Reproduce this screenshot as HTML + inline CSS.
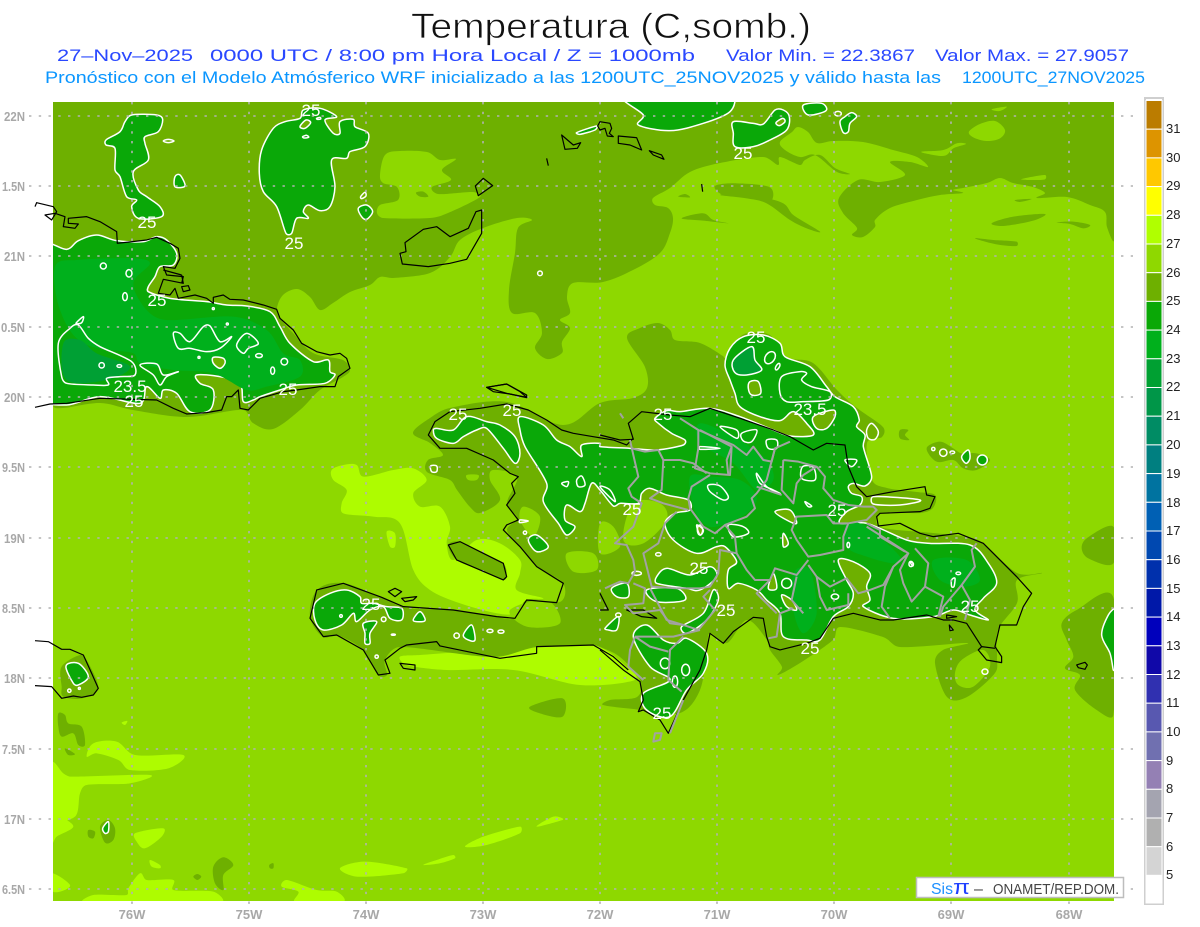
<!DOCTYPE html>
<html lang="es"><head><meta charset="utf-8"><title>Temperatura (C,somb.)</title>
<style>
html,body{margin:0;padding:0;background:#fff}
svg{display:block}
text{font-family:"Liberation Sans",sans-serif}
.o{fill:#6eb000;stroke:none}
.l{fill:#8ed800;stroke:none}
.y{fill:#aefc00;stroke:none}
.g{fill:#0aa808;stroke:#fff;stroke-width:4.5;stroke-linejoin:round}
.g2{fill:#00b01c;stroke:none}
.g3{fill:#00a034;stroke:none}
.w{fill:none;stroke:#fff;stroke-width:4.5;stroke-linejoin:round}
.wo{fill:#6eb000;stroke:#fff;stroke-width:4.5;stroke-linejoin:round}
.k{fill:none;stroke:#000;stroke-width:3.6;stroke-linejoin:round}
.p{fill:none;stroke:#a2a2a2;stroke-width:6;stroke-linejoin:round}
.lb{fill:#fff;font-size:17px;text-anchor:middle}
.ax{fill:#a8a8a8;font-size:13px;font-weight:bold}
.lg{fill:#222;font-size:13px}
</style></head><body>
<svg width="1200" height="927" viewBox="0 0 1200 927" xmlns="http://www.w3.org/2000/svg">
<rect width="1200" height="927" fill="#fff"/>
<defs><clipPath id="m"><rect x="53" y="102" width="1061" height="799"/></clipPath></defs>

<text x="411" y="38" font-size="35" textLength="400" lengthAdjust="spacingAndGlyphs" fill="#111" stroke="#fff" stroke-width=".7" paint-order="fill">Temperatura (C,somb.)</text>
<g font-size="17" fill="#2a48ff">
<text x="57" y="61" textLength="136" lengthAdjust="spacingAndGlyphs">27–Nov–2025</text>
<text x="210" y="61" textLength="485" lengthAdjust="spacingAndGlyphs">0000 UTC / 8:00 pm Hora Local / Z = 1000mb</text>
<text x="726" y="61" textLength="189" lengthAdjust="spacingAndGlyphs">Valor Min. = 22.3867</text>
<text x="935" y="61" textLength="194" lengthAdjust="spacingAndGlyphs">Valor Max. = 27.9057</text>
</g>
<g font-size="17" fill="#0a96ff">
<text x="45" y="83" textLength="896" lengthAdjust="spacingAndGlyphs">Pronóstico con el Modelo Atmósferico WRF inicializado a las 1200UTC_25NOV2025 y válido hasta las</text>
<text x="962" y="83" textLength="183" lengthAdjust="spacingAndGlyphs">1200UTC_27NOV2025</text>
</g>

<g clip-path="url(#m)">
<rect x="53" y="102" width="1061" height="799" fill="#8ed800"/>

<!-- top / cuba olive -->
<polygon class="o" points="53,102 1114,102 1114,240 1107,227 1105,212 1090,205 1067,197 1037,198 1045,193 1033,187 1013,183 1000,178 987,183 963,188 953,190 963,193 940,195 917,200 890,208 875,220 875,227 863,237 852,235 857,228 843,213 839,198 858,180 880,182 905,175 890,162 910,162 928,167 917,157 893,150 863,142 833,141 817,143 808,132 798,127 792,132 780,142 785,150 800,157 815,155 837,172 850,174 835,168 820,155 805,160 800,165 780,157 778,165 763,157 720,163 690,172 670,188 653,198 655,205 668,208 673,218 670,233 660,253 633,270 603,282 573,283 567,297 570,313 560,320 570,328 562,342 562,353 547,359 535,348 542,333 535,313 512,313 509,290 515,253 518,228 532,220 517,218 483,228 460,240 450,257 430,273 393,278 380,277 370,285 350,292 333,303 320,310 310,297 297,289 283,295 277,308 280,318 293,333 313,353 343,360 350,370 343,377 320,390 300,410 273,429 253,423 243,410 187,417 133,410 100,403 63,408 53,405"/>
<!-- light patches in olive -->
<polygon class="l" points="385,155 400,151 427,152 440,160 456,159 442,170 451,180 432,187 438,194 473,192 480,197 448,213 430,218 383,218 377,213 380,205 398,200 397,187 383,183 380,175"/>
<g transform="translate(720,100) scale(.3333)">
<polygon class="l" points="747,95 780,72 825,63 855,90 840,115 800,123 760,112"/>
<polygon class="l" points="605,155 670,150 710,130 738,132 700,145 675,167 630,163"/>
<polygon class="l" points="815,28 860,20 840,33"/>
<polygon class="l" points="905,237 975,225 975,238 930,240"/>
<polygon class="o" points="885,300 935,297 900,306"/>
<polygon class="o" points="815,370 880,350 975,342 940,362 850,378"/>
<polygon class="o" points="765,415 820,420 890,425 890,438 830,433"/>
<polygon class="o" points="1010,368 1060,365 1110,375 1090,385 1050,372"/>
<polygon class="o" points="0,285 65,280 120,290 190,310 220,345 300,395 260,385 210,360 140,310 80,295"/>
</g>
<g transform="translate(370,100) scale(.3333)">
<polygon class="o" points="1035,258 1100,250 1200,262 1200,305 1130,285 1060,285"/>
<polygon class="o" points="935,355 1000,340 1030,360 1075,370 1000,362"/>
<polygon class="o" points="925,290 945,282 960,292"/>
<polygon class="o" points="138,278 160,275 175,290 150,290"/>
</g>
<!-- yellow -->
<g transform="translate(280,380) scale(.3333)">
<polygon class="y" points="155,270 190,255 230,255 250,290 340,270 400,265 440,300 400,340 420,380 480,380 510,440 500,490 520,540 590,480 660,490 720,540 720,580 710,630 790,655 740,660 705,700 650,700 540,670 450,630 400,570 360,430 280,410 190,400 185,370 200,330 160,300"/>
<polygon class="y" points="360,830 420,825 770,800 940,795 1040,860 1065,900 900,915 700,870 500,870 380,855"/>
<polygon class="y" points="320,455 345,460 345,500 330,500"/>
</g>
<g transform="translate(40,620) scale(.3333)">
<polygon class="y" points="140,410 160,370 230,365 285,405 430,405 385,445 270,450 235,420 170,400"/>
<polygon class="y" points="35,430 70,460 95,470 330,465 270,490 140,495 120,520 105,590 35,590"/>
<polygon class="y" points="35,590 60,590 100,620 50,650 35,670"/>
<polygon class="y" points="285,640 370,625 365,650 315,685 290,665"/>
<polygon class="y" points="35,760 90,795 60,815 35,810"/>
<polygon class="y" points="130,845 160,825 260,825 265,805 300,760 320,780 400,780 400,810 520,815 545,845"/>
<polygon class="y" points="725,800 740,780 830,810 890,815 910,845 765,845 775,815"/>
<polygon class="y" points="900,745 975,725 1100,745 1090,760 950,770"/>
<polygon class="y" points="1275,680 1330,650 1440,620 1440,640 1340,675"/>
<polygon class="y" points="1150,735 1190,720 1240,705 1245,715 1200,730"/>
<polygon class="y" points="1490,620 1540,590 1568,595 1568,600"/>
<polygon class="y" points="330,720 360,735 360,745 335,740"/>
<polygon class="y" points="245,308 262,303 255,315"/>
<polygon class="o" points="55,280 75,285 85,310 125,320 135,375 115,375 100,340 65,350 55,320"/>
<polygon class="o" points="520,740 550,712 580,735 550,765 550,810 525,790"/>
<polygon class="o" points="145,630 165,635 160,655 145,650"/>
<polygon class="o" points="180,620 205,600 225,625 220,660 195,668"/>
<polygon class="o" points="65,140 120,105 140,120 175,205 125,235 70,230 65,200"/>
<polygon class="o" points="75,385 105,402 85,405"/>
<polygon class="o" points="460,770 472,762 484,770 472,780"/>
<polygon class="o" points="688,735 700,730 700,745 690,745"/>
<polygon class="o" points="1470,260 1568,235 1568,290 1500,280"/>
</g>
<g transform="translate(1050,500) scale(.3333)">
<polygon class="o" points="190,80 110,115 95,145 115,175 190,190"/>
<polygon class="o" points="190,292 80,330 35,370 50,420 70,470 45,505 90,525 75,570 140,630 190,645"/>
<polygon class="g" points="195,330 175,345 155,405 180,460 190,510 195,510"/>
</g>
<!-- Hispaniola olive -->
<polygon class="o" points="413,433 430,418 450,408 507,402 563,425 600,403 633,398 647,388 645,367 627,338 640,328 658,323 670,330 675,340 700,343 723,356 725,358 737,340 748,333 770,335 787,357 813,363 837,390 857,408 883,427 882,437 867,443 872,480 887,488 917,492 935,495 933,508 920,513 880,513 880,527 933,533 967,537 983,543 1017,573 1042,573 1017,580 1017,603 998,630 997,657 995,673 967,697 947,697 935,663 943,650 967,643 900,647 883,637 840,627 833,640 800,663 778,675 782,667 770,650 767,640 747,620 727,643 710,633 707,650 700,690 680,713 643,710 603,705 610,700 637,697 640,680 620,657 600,647 593,645 537,647 493,657 400,647 385,660 387,675 378,675 363,650 337,635 323,637 310,617 317,590 343,583 380,597 407,608 453,610 497,617 515,618 527,600 560,602 563,583 537,567 520,547 507,530 517,518 507,503 517,477 493,470 490,480 500,500 480,513 470,507 457,490 450,480 427,472 428,460 443,455 430,443"/>
<g transform="translate(600,380) scale(.3333)">
<polygon class="l" points="1065,880 1085,840 1150,810 1170,860 1120,920 1075,915"/>
<polygon class="o" points="900,150 925,150 915,165 928,180 900,175"/>
<polygon class="o" points="980,205 1020,185 1060,205 1085,220 1130,220 1170,240 1130,270 1090,265 1060,240 1010,245"/>
<polygon class="l" points="100,370 180,370 200,420 130,490 70,480"/>
<polygon class="l" points="0,430 40,440 60,500 0,520"/>
</g>
<g transform="translate(280,380) scale(.3333)">
<polygon class="o" points="505,495 540,485 610,520 670,550 680,590 670,600 600,570 530,540"/>
<polygon class="l" points="860,520 940,520 950,570 880,575"/>
<polygon class="l" points="730,380 780,410 760,470 720,420"/>
<polygon class="l" points="690,690 800,660 840,730 740,740"/>
<polygon class="l" points="560,285 595,285 590,300 565,300"/>
</g>

<!-- green: top blobs -->
<g transform="scale(.3333)">
<polygon class="g" points="395,345 470,345 488,358 475,395 435,410 435,430 445,480 400,515 415,570 440,590 480,620 485,650 415,655 395,620 410,600 380,590 360,530 345,510 345,445 318,435 318,420 360,395 375,365"/>
<polygon class="g" points="900,355 910,330 960,325 1010,350 975,360 1000,400 1020,400 1020,365 1060,358 1065,380 1105,400 1095,440 1050,455 1040,475 995,480 1005,560 990,620 960,632 925,615 910,635 925,655 890,655 875,700 858,700 830,620 790,575 778,520 785,450 820,385 855,365"/>
<polygon class="g" points="525,530 540,525 555,558 525,560"/>
<polygon class="g" points="1075,625 1100,615 1118,635 1100,658 1085,650"/>
<polygon class="w" points="490,423 505,418 522,423 505,428"/>
<polygon class="wo" points="900,380 918,360 932,368 915,385"/>
<polygon class="w" points="908,410 920,406 926,412 912,414"/>
<polygon class="w" points="1082,590 1095,577 1098,588 1085,596"/>
<polygon class="w" points="950,355 960,352 962,357 952,358"/>
</g>
<g transform="translate(370,100) scale(.3333)">
<polygon class="g" points="765,-10 820,45 805,75 900,92 1000,70 1080,35 1085,-10"/>
<polygon class="g" points="620,98 680,78 675,90 630,103"/>
<circle class="w" cx="510" cy="520" r="7"/>
</g>
<g transform="translate(720,100) scale(.3333)">
<polygon class="g" points="40,65 100,70 130,72 165,30 190,30 208,50 200,90 150,120 100,140 45,140 40,100"/>
<polygon class="wo" points="168,68 188,55 195,65 178,77"/>
<polygon class="g" points="250,15 305,10 318,32 265,45"/>
<polygon class="g" points="360,65 375,50 395,38 410,50 390,70 385,95 370,98"/>
<ellipse class="w" cx="354" cy="41" rx="10" ry="7"/>
</g>
<!-- Cuba -->
<g transform="translate(0,220) scale(.3333)">
<polygon class="g" points="130,78 200,88 235,62 290,45 350,62 430,65 470,50 500,60 530,100 520,135 480,140 465,170 445,200 445,215 510,235 620,245 680,255 740,258 810,275 840,320 870,370 940,425 985,420 990,455 1005,465 975,490 890,495 840,510 780,530 760,540 730,545 720,490 660,470 590,465 600,490 640,510 630,570 570,575 530,520 490,510 480,535 440,500 420,550 300,530 200,555 130,530"/>
<polygon class="g2" points="165,140 230,120 400,115 450,130 400,190 440,270 500,300 700,290 800,330 850,400 900,420 900,470 800,500 740,510 640,460 520,450 420,430 400,400 250,370 180,270"/>
<polygon class="g3" points="190,370 240,360 290,400 390,440 320,480 200,480"/>
<polygon class="w" points="175,370 210,325 235,315 265,355 300,380 395,425 405,465 360,470 320,475 325,495 280,495 200,490 185,470"/>
<polygon class="w" points="228,310 250,290 245,308"/>
<polygon class="w" points="520,340 540,340 570,365 610,320 630,318 660,365 695,350 660,385 620,395 570,385 535,385"/>
<polygon class="w" points="710,375 740,340 775,370 745,385 730,400"/>
<polygon class="wo" points="640,412 670,415 675,430 660,445 640,430"/>
<polygon class="w" points="420,435 470,432 490,465 535,455 500,470 480,495 460,465"/>
<ellipse class="w" cx="310" cy="138" rx="9" ry="9"/>
<ellipse class="w" cx="387" cy="160" rx="9" ry="11"/>
<ellipse class="w" cx="375" cy="230" rx="7" ry="12"/>
<circle class="w" cx="305" cy="436" r="8"/>
<ellipse class="w" cx="358" cy="438" rx="7" ry="4"/>
<ellipse class="w" cx="853" cy="425" rx="10" ry="10"/>
<ellipse class="w" cx="818" cy="452" rx="6" ry="11"/>
<ellipse class="w" cx="777" cy="407" rx="10" ry="6"/>
<circle class="w" cx="640" cy="266" r="3"/>
<circle class="w" cx="682" cy="312" r="3"/>
<circle class="w" cx="597" cy="412" r="3"/>
</g>
<!-- Haiti greens -->
<g transform="translate(280,380) scale(.3333)">
<polygon class="g" points="460,150 470,145 520,150 560,110 620,125 660,135 705,170 720,220 705,250 670,205 620,145 590,150 550,170 520,190 470,175"/>
<polygon class="g" points="105,670 150,640 200,630 240,650 245,670 280,670 320,680 365,685 365,720 330,715 310,680 270,690 230,725 220,700 185,735 130,750 105,720"/>
<polygon class="g" points="250,730 290,725 270,760 270,790 255,790 255,760"/>
<polygon class="g" points="400,722 420,695 435,722"/>
<polygon class="g" points="550,765 575,735 585,780 565,780"/>
<polygon class="g" points="745,480 770,465 805,500 770,515"/>
<circle class="w" cx="311" cy="718" r="7"/>
<circle class="w" cx="183" cy="708" r="4"/>
<circle class="w" cx="530" cy="767" r="8"/>
<ellipse class="w" cx="630" cy="753" rx="9" ry="5"/><ellipse class="w" cx="663" cy="755" rx="9" ry="5"/>
<ellipse class="w" cx="340" cy="764" rx="6" ry="2"/>
<ellipse class="w" cx="290" cy="830" rx="5" ry="5"/>
<polygon class="w" points="452,258 470,258 470,275 455,275"/>
<polygon class="w" points="720,420 745,423 720,428"/>
<circle class="w" cx="735" cy="458" r="5"/>
</g>
<!-- Hispaniola main green (Haiti north + DR) -->
<g transform="translate(600,380) scale(.3333)">
<polygon class="g" points="0,200 90,205 170,210 250,195 255,180 215,160 175,130 165,115 200,92 240,95 330,85 420,110 520,150 570,168 640,165 620,130 580,95 540,122 480,110 420,80 405,40 390,0 375,-45 390,-95 430,-130 490,-135 540,-110 555,-70 630,-40 680,20 705,50 760,80 778,120 770,140 795,165 790,200 815,290 795,318 760,310 745,320 755,340 785,350 780,375 740,395 720,430 800,430 920,480 990,490 1110,495 1165,550 1190,610 1150,655 1125,690 1165,720 1110,705 1060,690 1000,710 880,715 790,680 810,660 800,620 810,580 760,545 715,540 740,600 760,640 745,680 700,710 660,780 620,780 550,770 540,700 500,660 470,630 415,610 385,625 385,570 410,545 375,500 350,500 290,520 220,480 195,430 225,400 270,390 265,360 200,345 150,325 125,340 115,370 60,370 40,378 0,330 -25,310 -45,370 -60,395 -100,375 -105,420 -75,440 -100,465 -125,430 -170,365 -160,310 -225,200 -240,150 -240,110 -170,135 -130,180 -90,200 -55,230 -55,195 0,190"/>
<polygon class="g2" points="270,290 330,290 420,300 470,350 440,400 350,440 310,430 280,380"/>
<polygon class="g2" points="580,580 630,570 650,700 610,760 580,690"/>
<polygon class="g2" points="740,430 800,440 900,530 880,550 800,530 740,500"/>
<polygon class="g2" points="1000,540 1100,540 1140,600 1090,620 1020,600"/>
<polygon class="g2" points="300,130 400,170 500,240 520,300 470,330 400,250 300,190"/>
<polygon class="g" points="170,590 200,565 270,585 330,560 350,590 300,630 260,625 170,610"/>
<polygon class="g" points="130,940 210,900 150,860 100,770 140,735 190,780 230,790 260,775 320,820 310,880 260,930 210,1010 140,990"/>
<polygon class="g" points="15,745 55,710 50,750 25,750"/>
<polygon class="g" points="35,625 80,610 85,650 50,650"/>
<polygon class="g" points="140,630 230,625 255,660 170,665"/>
<polygon class="g" points="310,700 340,630 355,660 320,720 260,760 245,740"/>
<polygon class="wo" points="525,395 570,390 590,430 560,420"/>
<polygon class="wo" points="550,460 565,490 550,500"/>
<polygon class="wo" points="505,625 520,580 530,625"/>
<polygon class="wo" points="545,645 575,660 590,690 560,680"/>
<polygon class="wo" points="290,435 310,450 300,465"/>
<polygon class="w" points="385,435 430,440 445,460 400,470"/>
<polygon class="w" points="425,160 470,150 455,185 430,183"/>
<polygon class="w" points="360,140 410,150 410,175"/>
<polygon class="w" points="500,180 530,180 530,205 505,205"/>
<polygon class="w" points="300,200 360,205 300,208"/>
<polygon class="w" points="325,315 360,318 385,350 370,360 330,335"/>
<polygon class="w" points="470,280 480,310 520,330 540,340 500,320"/>
<polygon class="w" points="608,260 640,262 645,300 605,295"/>
<polygon class="w" points="615,365 635,378 625,380"/>
<polygon class="w" points="735,240 770,240 755,260"/>
<polygon class="w" points="820,350 960,360 900,375 820,372"/>
<polygon class="w" points="1055,600 1065,595 1062,620 1055,620"/>
<polygon class="w" points="930,545 940,550 938,558"/>
<ellipse class="w" cx="705" cy="650" rx="11" ry="8"/>
<ellipse class="w" cx="560" cy="610" rx="15" ry="15"/>
<ellipse class="w" cx="55" cy="705" rx="8" ry="6"/>
<ellipse class="w" cx="225" cy="905" rx="8" ry="17"/>
<ellipse class="w" cx="257" cy="870" rx="12" ry="17"/>
<ellipse class="w" cx="195" cy="850" rx="14" ry="16"/>
<ellipse class="w" cx="1155" cy="875" rx="9" ry="8"/>
<ellipse class="w" cx="175" cy="523" rx="8" ry="5"/>
<ellipse class="w" cx="110" cy="580" rx="14" ry="6"/>
<ellipse class="w" cx="300" cy="450" rx="8" ry="15"/>
<ellipse class="w" cx="745" cy="495" rx="4" ry="8"/>
<ellipse class="w" cx="933" cy="552" rx="6" ry="8"/>
<ellipse class="w" cx="1075" cy="580" rx="7" ry="4"/>
<polygon class="w" points="-70,300 -55,288 -45,315 -65,320"/>
<polygon class="w" points="-115,310 -95,305 -100,320"/>
<!-- Samana inner -->
<polygon class="wo" points="400,-60 455,-100 465,-60 485,-30 440,-15 405,-22" style="fill:#00a034"/>
<ellipse class="w" cx="510" cy="-67" rx="14" ry="20" transform="rotate(35 510 -67)"/>
<ellipse class="w" cx="533" cy="-40" rx="5" ry="11" transform="rotate(30 533 -40)"/>
<polygon class="wo" points="450,5 475,5 482,40 455,45 445,25"/>
<polygon class="w" points="545,-10 600,-25 620,-20 605,0 635,20 690,35 685,60 610,65 560,65 540,40"/>
<polygon class="wo" points="640,110 700,90 705,110 680,145 650,145"/>
<polygon class="w" points="800,150 815,130 835,155 825,178 805,175"/>
<polygon class="w" points="0,320 30,330 45,365"/>
<!-- east islets -->
<ellipse class="w" cx="1000" cy="207" rx="5" ry="5"/>
<circle class="w" cx="1030" cy="218" r="11" fill="none"/>
<ellipse class="w" cx="1057" cy="217" rx="7" ry="4"/>
<polygon class="g" points="1085,230 1105,210 1110,235 1098,250"/>
<circle class="g" cx="1147" cy="240" r="15"/>
</g>
<g transform="translate(40,620) scale(.3333)">
<polygon class="g" points="78,138 115,130 145,170 115,195 100,190"/>
<circle class="w" cx="88" cy="212" r="5"/><circle class="w" cx="118" cy="205" r="3"/>
<polygon class="g" points="188,625 205,605 205,635 195,640"/>
</g>
</g>

<!-- grid -->
<g stroke="#b2b2b2" stroke-width="1.6" stroke-dasharray="2.4 7.35" fill="none">
<path d="M29 116H1133M29 186H1133M29 256H1133M29 327H1133M29 397H1133M29 467H1133M29 538H1133M29 608H1133M29 678H1133M29 749H1133M29 819H1133M29 889H1133"/>
<path d="M132 102V906M249 102V906M366 102V906M483 102V906M600 102V906M717 102V906M834 102V906M951 102V906M1069 102V906"/>
</g>

<!-- coasts -->
<g transform="scale(.3333)"><polyline class="k" points="105,620 110,608 160,620 170,635 155,660 135,645 165,640 195,650 190,680 225,685 235,672 205,670 205,655 260,650 300,665 350,695 352,730 440,720 470,712 510,730 535,745 540,775 525,805 490,800 500,825 550,830 545,850"/></g>
<g transform="translate(0,220) scale(.3333)">
<polyline class="k" points="545,165 550,190 490,178 475,220 510,225 525,205 535,235 585,225 620,235 640,250 640,232 670,225 690,238 730,240 790,255 830,268 840,295 880,330 905,370 950,395 990,405 1020,400 1040,415 1050,445 1015,470 1005,500 960,500 890,510 850,515 780,535 745,570 720,565 715,510 695,530 680,530 665,570 620,578 560,582 520,565 470,540 300,535 200,550 150,552 105,562"/>
<polyline class="k" points="490,150 545,165"/>
<polygon class="k" points="545,200 565,197 570,210 550,215"/>
</g>
<g transform="translate(370,100) scale(.3333)">
<polygon class="k" points="575,105 610,135 632,128 622,145 585,148"/>
<polygon class="k" points="690,65 720,70 725,85 718,100 730,110 712,108 705,85 690,90 683,78"/>
<polygon class="k" points="745,108 800,113 815,150 780,135 745,130"/>
<polygon class="k" points="838,152 875,165 882,178 850,165"/>
<polyline class="k" points="530,175 535,197"/><polyline class="k" points="995,252 998,275"/>
<polygon class="k" points="340,235 368,257 325,287 316,258"/>
<polygon class="k" points="335,330 318,335 295,385 240,410 200,380 160,388 105,428 108,455 90,460 97,492 175,500 240,490 290,478 335,400"/>
<polygon class="k" points="350,862 410,852 470,885 470,893 410,880"/>
</g>
<g transform="translate(280,380) scale(.3333)">
<polygon class="k" points="620,22 680,12 720,35 740,52 690,42 640,35"/>
<polyline class="k" points="1060,175 1040,195 1000,180 940,170 880,160 845,150 800,120 745,90 680,72 600,85 510,95 465,125 445,165 480,205 560,205 640,240 690,280 715,290 695,310 705,340 680,375 715,420 680,435 670,450 720,500 770,560 850,610 830,668 740,660 705,715 650,710 520,690 370,680 300,650 190,610 110,630 90,715 130,770 170,765 250,810 295,885 330,880 315,840 360,805 380,795 470,785 480,798 660,835 770,820 770,800 940,795 1000,830 1045,870"/>
<polygon class="k" points="505,495 540,485 610,520 670,550 680,590 670,600 600,570 530,540"/>
<polygon class="k" points="325,635 345,625 365,635 345,650"/>
<polygon class="k" points="365,655 410,650 400,660 375,665"/>
<polygon class="k" points="360,850 405,855 405,870 370,865"/>
</g>
<g transform="translate(600,380) scale(.3333)">
<polyline class="k" points="0,165 60,180 100,178 85,130 125,95 210,105 270,110 330,85 420,115 520,150 570,170 640,210 680,190 735,195 745,260 770,320 800,350 880,335 975,320 980,345 1005,350 990,385 960,395 840,400 830,410 835,438 900,430 960,460 1000,470 1075,460 1150,490 1250,590 1295,640 1270,680 1250,735 1200,735 1185,800 1205,830 1205,848 1160,840 1135,810 1145,800 1100,730 1060,720 1030,720 980,705 880,720 840,720 760,700 700,715 660,775 620,790 540,810 510,800 500,770 490,715 460,712 400,755 370,790 330,760 320,810 300,870 250,960 205,1060 180,1020 130,990 115,995 130,960 120,905 70,870 0,810"/>
<polyline class="k" points="0,640 25,690 0,690"/>
<polygon class="k" points="80,690 130,690 170,715 125,710"/>
<polygon class="k" points="1040,705 1070,710 1040,715"/>
<polygon class="k" points="1048,735 1060,750 1050,752"/>
<polyline class="k" points="1145,800 1185,805"/>
<polygon class="k" points="165,1060 185,1060 180,1080 160,1085"/>
</g>
<g transform="translate(40,620) scale(.3333)">
<polyline class="k" points="-15,62 25,65 65,88 90,88 130,105 155,160 175,205 160,225 125,232 100,228 65,235 35,200 -15,197"/>
</g>
<g transform="translate(1050,500) scale(.3333)"><polygon class="k" points="80,495 105,487 112,495 105,508 85,503"/></g>

<!-- provinces -->
<g transform="translate(600,380) scale(.3333)">
<polyline class="p" points="90,180 100,225 115,290 85,325 95,350 125,370 100,440 45,490 80,495 100,540 105,575 85,610 60,605 15,625"/>
<polyline class="p" points="100,610 135,625 130,670 75,675 100,700 180,690 210,730 250,735"/>
<polyline class="p" points="95,205 135,215 175,210 190,240 240,240 280,250 320,280"/>
<polyline class="p" points="240,115 295,150 295,205 285,265 330,280 390,285 395,200 300,150"/>
<polyline class="p" points="295,150 400,195 440,225 460,200 490,240 515,245 525,205 570,185"/>
<polyline class="p" points="395,200 380,240 385,285"/>
<polyline class="p" points="525,205 500,300 470,340 455,355 465,385 440,410 375,435 345,460 310,440 270,385 265,355 275,320 330,285"/>
<polyline class="p" points="190,240 185,330 150,355 190,370 265,390"/>
<polyline class="p" points="230,395 195,430 175,490 130,520 155,620 230,625"/>
<polyline class="p" points="550,240 595,245 650,260 675,290 670,325 700,360 745,375 790,380 820,380 830,390 800,420 745,430 730,470 730,510 660,525 625,530 590,480 575,450 590,410 680,405 700,430 745,430"/>
<polyline class="p" points="550,240 545,330 580,370 590,310 610,285 650,260"/>
<polyline class="p" points="470,320 545,345"/>
<polyline class="p" points="375,435 405,470 410,520 440,570 465,600 510,600 525,565 590,585 625,540"/>
<polyline class="p" points="625,555 650,590 690,620 740,595 775,640 810,630 850,615 880,560 925,520 800,440"/>
<polyline class="p" points="880,560 855,620 845,680 870,715"/>
<polyline class="p" points="925,520 900,570 910,610 935,665 975,620 1030,650 1015,710"/>
<polyline class="p" points="945,505 985,550 975,620"/>
<polyline class="p" points="800,430 840,450 840,470 915,515"/>
<polyline class="p" points="1130,490 1115,510 1125,560 1085,615 1030,680 1020,710"/>
<polyline class="p" points="1085,615 1110,660 1095,720"/>
<polyline class="p" points="650,590 660,650 680,690 745,675 745,640"/>
<polyline class="p" points="590,590 575,660 610,700"/>
<polyline class="p" points="580,685 540,700 530,770 505,775"/>
<polyline class="p" points="510,600 470,640 530,700"/>
<polyline class="p" points="410,520 360,510 355,580 330,620 300,625 230,625"/>
<polyline class="p" points="150,625 200,720 250,735 295,750 345,690 310,650 330,630"/>
<polyline class="p" points="250,770 210,810 205,900 245,935"/>
<polyline class="p" points="105,770 150,800 205,815"/>
<polyline class="p" points="105,770 90,810 85,860 130,900"/>
<polyline class="p" points="300,750 220,770 105,770"/>
<polyline class="p" points="250,960 210,1060"/>
<polygon class="p" points="165,1060 185,1060 180,1080 160,1085"/>
<polyline class="p" points="60,100 70,115"/>
</g>

<!-- contour labels -->
<text class="lb" x="311" y="116">25</text><text class="lb" x="147" y="228">25</text><text class="lb" x="294" y="249">25</text><text class="lb" x="157" y="306">25</text><text class="lb" x="756" y="343">25</text><text class="lb" x="134" y="407">25</text><text class="lb" x="288" y="395">25</text><text class="lb" x="130" y="392">23.5</text><text class="lb" x="458" y="420">25</text><text class="lb" x="512" y="416">25</text><text class="lb" x="663" y="420">25</text><text class="lb" x="810" y="415">23.5</text><text class="lb" x="632" y="515">25</text><text class="lb" x="837" y="516">25</text><text class="lb" x="699" y="574">25</text><text class="lb" x="726" y="616">25</text><text class="lb" x="810" y="654">25</text><text class="lb" x="970" y="612">25</text><text class="lb" x="371" y="610">25</text><text class="lb" x="662" y="719">25</text><text class="lb" x="743" y="159">25</text>

<!-- axes -->
<g class="ax">
<text x="4" y="121" textLength="21" lengthAdjust="spacingAndGlyphs">22N</text><text x="2" y="191" textLength="23" lengthAdjust="spacingAndGlyphs">1.5N</text><text x="4" y="261" textLength="21" lengthAdjust="spacingAndGlyphs">21N</text><text x="1" y="332" textLength="24" lengthAdjust="spacingAndGlyphs">0.5N</text><text x="4" y="402" textLength="21" lengthAdjust="spacingAndGlyphs">20N</text><text x="2" y="472" textLength="23" lengthAdjust="spacingAndGlyphs">9.5N</text><text x="4" y="543" textLength="21" lengthAdjust="spacingAndGlyphs">19N</text><text x="2" y="613" textLength="23" lengthAdjust="spacingAndGlyphs">8.5N</text><text x="4" y="683" textLength="21" lengthAdjust="spacingAndGlyphs">18N</text><text x="2" y="754" textLength="23" lengthAdjust="spacingAndGlyphs">7.5N</text><text x="4" y="824" textLength="21" lengthAdjust="spacingAndGlyphs">17N</text><text x="2" y="894" textLength="23" lengthAdjust="spacingAndGlyphs">6.5N</text>
</g>
<g class="ax" text-anchor="middle">
<text x="132" y="919">76W</text><text x="249" y="919">75W</text><text x="366" y="919">74W</text><text x="483" y="919">73W</text><text x="600" y="919">72W</text><text x="717" y="919">71W</text><text x="834" y="919">70W</text><text x="951" y="919">69W</text><text x="1069" y="919">68W</text>
</g>

<!-- logo -->
<rect x="916.5" y="877.5" width="207" height="20" fill="#fff" stroke="#bdbdbd" stroke-width="1.5"/>
<text x="931" y="894" font-size="16" fill="#1e90ff" textLength="22" lengthAdjust="spacingAndGlyphs">Sis</text>
<text x="953" y="894" font-size="20" fill="#2040ff" textLength="17" lengthAdjust="spacingAndGlyphs">π</text>
<text x="974" y="894" font-size="16" fill="#444">–</text>
<text x="993" y="894" font-size="15" fill="#444" textLength="126" lengthAdjust="spacingAndGlyphs">ONAMET/REP.DOM.</text>

<!-- legend -->
<rect x="1145" y="98" width="18" height="806" fill="#fff" stroke="#cfcfcf" stroke-width="2"/>
<g stroke="#fff" stroke-width="1">
<rect x="1146" y="100.5" width="16" height="28.7" fill="#bb7c00"/>
<rect x="1146" y="129.2" width="16" height="28.7" fill="#dd9400"/>
<rect x="1146" y="157.9" width="16" height="28.7" fill="#ffc800"/>
<rect x="1146" y="186.6" width="16" height="28.7" fill="#ffff00"/>
<rect x="1146" y="215.3" width="16" height="28.7" fill="#b0ff00"/>
<rect x="1146" y="244" width="16" height="28.7" fill="#8fd800"/>
<rect x="1146" y="272.7" width="16" height="28.7" fill="#6eb000"/>
<rect x="1146" y="301.4" width="16" height="28.7" fill="#0aa806"/>
<rect x="1146" y="330.1" width="16" height="28.7" fill="#00b01c"/>
<rect x="1146" y="358.8" width="16" height="28.7" fill="#00a032"/>
<rect x="1146" y="387.5" width="16" height="28.7" fill="#009648"/>
<rect x="1146" y="416.2" width="16" height="28.7" fill="#008c64"/>
<rect x="1146" y="444.9" width="16" height="28.7" fill="#007f80"/>
<rect x="1146" y="473.6" width="16" height="28.7" fill="#0073a0"/>
<rect x="1146" y="502.3" width="16" height="28.7" fill="#0060b4"/>
<rect x="1146" y="531" width="16" height="28.7" fill="#0048b0"/>
<rect x="1146" y="559.7" width="16" height="28.7" fill="#0030ac"/>
<rect x="1146" y="588.4" width="16" height="28.7" fill="#0018a8"/>
<rect x="1146" y="617.1" width="16" height="28.7" fill="#0000bc"/>
<rect x="1146" y="645.8" width="16" height="28.7" fill="#1008a8"/>
<rect x="1146" y="674.5" width="16" height="28.7" fill="#3030b0"/>
<rect x="1146" y="703.2" width="16" height="28.7" fill="#5858b0"/>
<rect x="1146" y="731.9" width="16" height="28.7" fill="#7070b0"/>
<rect x="1146" y="760.6" width="16" height="28.7" fill="#9480b4"/>
<rect x="1146" y="789.3" width="16" height="28.7" fill="#a4a4b0"/>
<rect x="1146" y="818" width="16" height="28.7" fill="#b0b0b0"/>
<rect x="1146" y="846.7" width="16" height="28.7" fill="#d4d4d4"/>
<rect x="1146" y="875.4" width="16" height="27.6" fill="#fff"/>
</g>
<g class="lg">
<text x="1166" y="133">31</text><text x="1166" y="162">30</text><text x="1166" y="190">29</text><text x="1166" y="219">28</text><text x="1166" y="248">27</text><text x="1166" y="277">26</text><text x="1166" y="305">25</text><text x="1166" y="334">24</text><text x="1166" y="363">23</text><text x="1166" y="391">22</text><text x="1166" y="420">21</text><text x="1166" y="449">20</text><text x="1166" y="478">19</text><text x="1166" y="507">18</text><text x="1166" y="535">17</text><text x="1166" y="564">16</text><text x="1166" y="593">15</text><text x="1166" y="621">14</text><text x="1166" y="650">13</text><text x="1166" y="679">12</text><text x="1166" y="707">11</text><text x="1166" y="736">10</text><text x="1166" y="765">9</text><text x="1166" y="793">8</text><text x="1166" y="822">7</text><text x="1166" y="851">6</text><text x="1166" y="879">5</text>
</g>
</svg>
<script>
/* Round the traced contour polygons into smooth closed curves. */
(function(){
var ns='http://www.w3.org/2000/svg';
var list=document.querySelectorAll('polygon.o,polygon.l,polygon.y,polygon.g,polygon.g2,polygon.g3,polygon.w,polygon.wo');
Array.prototype.forEach.call(list,function(e){
  var a=e.getAttribute('points').trim().split(/\s+/).map(function(s){var q=s.split(',');return [+q[0],+q[1]];});
  var n=a.length,d='M'+a[0][0]+' '+a[0][1];
  function tan(p,c,x,seg){
    var tx=(x[0]-p[0])/6,ty=(x[1]-p[1])/6,l=Math.sqrt(tx*tx+ty*ty),m=seg/2.5;
    if(l>m&&l>0){tx*=m/l;ty*=m/l;}
    return [tx,ty];
  }
  for(var i=0;i<n;i++){
    var p0=a[(i-1+n)%n],p1=a[i],p2=a[(i+1)%n],p3=a[(i+2)%n];
    var s=Math.sqrt(Math.pow(p2[0]-p1[0],2)+Math.pow(p2[1]-p1[1],2));
    var t1=tan(p0,p1,p2,s),t2=tan(p1,p2,p3,s);
    d+='C'+(p1[0]+t1[0]).toFixed(1)+' '+(p1[1]+t1[1]).toFixed(1)+' '+(p2[0]-t2[0]).toFixed(1)+' '+(p2[1]-t2[1]).toFixed(1)+' '+p2[0]+' '+p2[1];
  }
  var r=document.createElementNS(ns,'path');
  r.setAttribute('d',d+'Z');
  r.setAttribute('class',e.getAttribute('class'));
  if(e.getAttribute('style'))r.setAttribute('style',e.getAttribute('style'));
  e.parentNode.replaceChild(r,e);
});
})();
</script>
</body></html>
